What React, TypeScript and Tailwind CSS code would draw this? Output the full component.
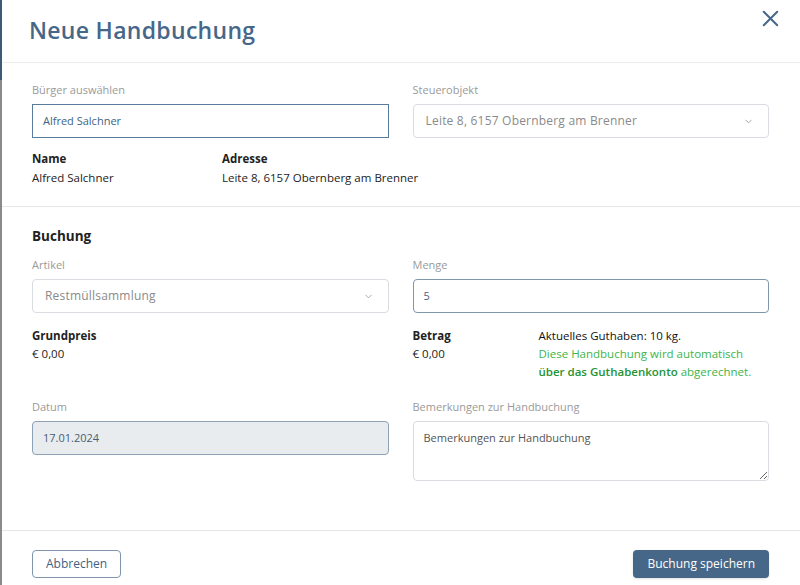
import { X, ChevronDown } from "lucide-react";

const font = { fontFamily: '"Open Sans", "Noto Sans", sans-serif' };

function Label({ children }: { children: React.ReactNode }) {
  return <div className="text-[11px] leading-4 text-[#9a9a9a] mb-1.5">{children}</div>;
}

function SelectBox({ value }: { value: string }) {
  return (
    <div className="h-[34px] rounded border border-[#d9dde2] flex items-center justify-between pl-3 pr-3.5 bg-white">
      <span className="text-[12px] text-[#8a8a8a] tracking-[0.2px]">{value}</span>
      <ChevronDown size={11} className="text-[#9aa3ad]" strokeWidth={2} />
    </div>
  );
}

export default function App() {
  return (
    <div className="w-[800px] h-[585px] flex overflow-hidden bg-white" style={font}>
      <div className="w-[2px] flex flex-col">
        <div className="h-[80px] bg-[#3d5a78]" />
        <div className="flex-1 bg-[#8a8a8a]" />
      </div>

      <div className="flex-1 flex flex-col">
        <header className="h-[63px] border-b border-[#ececec] flex items-start justify-between pl-[27px] pr-4">
          <h1 className="text-[23px] font-semibold leading-[34px] mt-[13px] text-[#476789] tracking-[0.3px]">
            Neue Handbuchung
          </h1>
          <button className="mt-[5px] text-[#476789]">
            <X size={27} strokeWidth={1.8} />
          </button>
        </header>

        <section className="border-b border-[#e6e6e6] pl-[30px] pr-[31px] pt-[19px] pb-[20px]">
          <div className="grid grid-cols-2 gap-x-6">
            <div>
              <Label>Bürger auswählen</Label>
              <div className="h-[34px] border border-[#5a7c9c] flex items-center px-2.5">
                <span className="text-[11px] text-[#3f6283]">Alfred Salchner</span>
              </div>
            </div>
            <div>
              <Label>Steuerobjekt</Label>
              <SelectBox value="Leite 8, 6157 Obernberg am Brenner" />
            </div>
          </div>
          <div className="flex mt-[13px] text-[11.5px] leading-4 text-[#222]">
            <div className="w-[190px]">
              <div className="font-bold">Name</div>
              <div className="mt-[3px]">Alfred Salchner</div>
            </div>
            <div>
              <div className="font-bold">Adresse</div>
              <div className="mt-[3px]">Leite 8, 6157 Obernberg am Brenner</div>
            </div>
          </div>
        </section>

        <section className="flex-1 border-b border-[#e6e6e6] pl-[30px] pr-[31px] pt-[19px]">
          <h2 className="text-[13.5px] font-bold leading-5 text-[#222]">Buchung</h2>
          <div className="grid grid-cols-2 gap-x-6 mt-[11px]">
            <div>
              <Label>Artikel</Label>
              <SelectBox value="Restmüllsammlung" />
              <div className="mt-[14px] text-[11.5px] leading-[18px] text-[#222]">
                <div className="font-bold">Grundpreis</div>
                <div>€ 0,00</div>
              </div>
            </div>
            <div>
              <Label>Menge</Label>
              <div className="h-[34px] rounded border border-[#8196ad] flex items-center px-2.5">
                <span className="text-[11px] text-[#3f6283]">5</span>
              </div>
              <div className="mt-[14px] flex text-[11.5px] leading-[18px] text-[#222]">
                <div className="w-[126px]">
                  <div className="font-bold">Betrag</div>
                  <div>€ 0,00</div>
                </div>
                <div>
                  <div className="font-medium text-[#111]">Aktuelles Guthaben: 10 kg.</div>
                  <div className="text-[#3cb44b]">Diese Handbuchung wird automatisch</div>
                  <div className="text-[#3cb44b]">
                    <span className="font-semibold text-[#249334]">über das Guthabenkonto</span> abgerechnet.
                  </div>
                </div>
              </div>
            </div>
          </div>
          <div className="grid grid-cols-2 gap-x-6 mt-[18px]">
            <div>
              <Label>Datum</Label>
              <div className="h-[34px] rounded border border-[#8ea2b7] bg-[#e9ecef] flex items-center px-2.5">
                <span className="text-[11px] text-[#4a5d72]">17.01.2024</span>
              </div>
            </div>
            <div>
              <Label>Bemerkungen zur Handbuchung</Label>
              <textarea
                readOnly
                placeholder="Bemerkungen zur Handbuchung"
                className="block w-full h-[60px] rounded border border-[#d9dde2] px-2.5 py-2 text-[11px] text-[#555] placeholder:text-[#555] resize-y outline-none"
              />
            </div>
          </div>
        </section>

        <footer className="h-[54px] flex items-start justify-between pl-[30px] pr-[31px] pt-[19px]">
          <button className="h-[28px] px-[13px] rounded border border-[#8196ad] text-[12px] font-medium text-[#3f6283] bg-white">
            Abbrechen
          </button>
          <button className="h-[28px] px-[14px] rounded bg-[#466787] text-[12px] font-medium text-white shadow-sm">
            Buchung speichern
          </button>
        </footer>
      </div>
    </div>
  );
}
